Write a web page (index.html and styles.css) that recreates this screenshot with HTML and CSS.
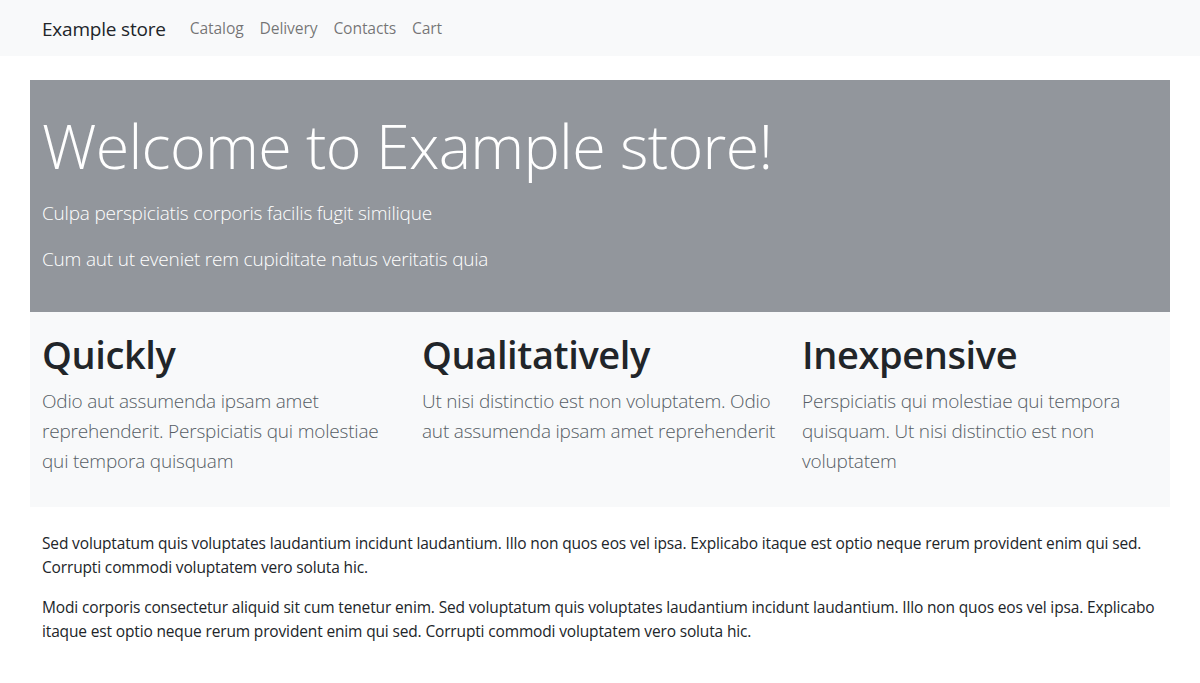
FILE: index.html
```html
<!DOCTYPE html>
<html lang="en">
<head>
<meta charset="utf-8">
<title>Example store</title>
<link rel="stylesheet" href="styles.css">
</head>
<body>
<nav class="navbar">
  <div class="container nav-inner">
    <a class="brand" href="#">Example store</a>
    <ul class="nav-links">
      <li><a href="#">Catalog</a></li>
      <li><a href="#">Delivery</a></li>
      <li><a href="#">Contacts</a></li>
      <li><a href="#">Cart</a></li>
    </ul>
  </div>
</nav>
<main class="container main">
  <section class="hero">
    <h1 class="hero-title">Welcome to Example store!</h1>
    <p class="lead">Culpa perspiciatis corporis facilis fugit similique</p>
    <p class="lead">Cum aut ut eveniet rem cupiditate natus veritatis quia</p>
  </section>
  <section class="features">
    <div class="feature">
      <h2 class="feature-title">Quickly</h2>
      <p class="feature-text">Odio aut assumenda ipsam amet reprehenderit. Perspiciatis qui molestiae qui tempora quisquam</p>
    </div>
    <div class="feature">
      <h2 class="feature-title">Qualitatively</h2>
      <p class="feature-text">Ut nisi distinctio est non voluptatem. Odio aut assumenda ipsam amet reprehenderit</p>
    </div>
    <div class="feature">
      <h2 class="feature-title">Inexpensive</h2>
      <p class="feature-text">Perspiciatis qui molestiae qui tempora quisquam. Ut nisi distinctio est non voluptatem</p>
    </div>
  </section>
  <section class="body-text">
    <p>Sed voluptatum quis voluptates laudantium incidunt laudantium. Illo non quos eos vel ipsa. Explicabo itaque est optio neque rerum provident enim qui sed. Corrupti commodi voluptatem vero soluta hic.</p>
    <p>Modi corporis consectetur aliquid sit cum tenetur enim. Sed voluptatum quis voluptates laudantium incidunt laudantium. Illo non quos eos vel ipsa. Explicabo itaque est optio neque rerum provident enim qui sed. Corrupti commodi voluptatem vero soluta hic.</p>
  </section>
</main>
</body>
</html>
```
FILE: styles.css
```css
* { box-sizing: border-box; }
html, body { margin: 0; padding: 0; }
body {
  font-family: "Open Sans", "Noto Sans", sans-serif;
  font-size: 15.5px;
  letter-spacing: -0.15px;
  line-height: 24px;
  color: #212529;
  background: #fff;
}
a { text-decoration: none; }
p { margin: 0 0 16px; }
h1, h2 { margin: 0; }

.container {
  width: 1140px;
  margin: 0 auto;
}

.navbar {
  background: #f8f9fa;
  height: 56px;
}
.nav-inner {
  display: flex;
  align-items: center;
  height: 56px;
  padding: 0 12px;
}
.brand {
  font-size: 19px;
  letter-spacing: -0.2px;
  line-height: 30px;
  color: #212529;
  margin-right: 16px;
  position: relative;
  top: 1px;
}
.nav-links {
  display: flex;
  list-style: none;
  margin: 0;
  padding: 0;
}
.nav-links a {
  display: block;
  padding: 8px;
  font-size: 15.7px;
  color: rgba(0, 0, 0, 0.55);
}

.main { margin-top: 24px; }

.hero {
  background: #92969c;
  color: #fff;
  padding: 28px 12px 22px;
}
.hero-title {
  font-size: 61px;
  font-weight: 300;
  letter-spacing: -0.7px;
  line-height: 76px;
  margin-bottom: 14px;
}
.lead {
  font-size: 19px;
  font-weight: 300;
  letter-spacing: -0.2px;
  line-height: 30px;
}

.features {
  background: #f8f9fa;
  display: grid;
  grid-template-columns: repeat(3, 1fr);
  padding-top: 18px;
  padding-bottom: 15px;
}
.feature { padding: 0 12px; }
.feature-title {
  font-size: 38px;
  font-weight: 600;
  letter-spacing: -0.4px;
  line-height: 48px;
  margin-bottom: 8px;
}
.feature-text {
  font-size: 19px;
  font-weight: 300;
  letter-spacing: -0.2px;
  line-height: 30px;
  color: #565d65;
}

.body-text {
  padding: 24px 12px 0;
}
```
